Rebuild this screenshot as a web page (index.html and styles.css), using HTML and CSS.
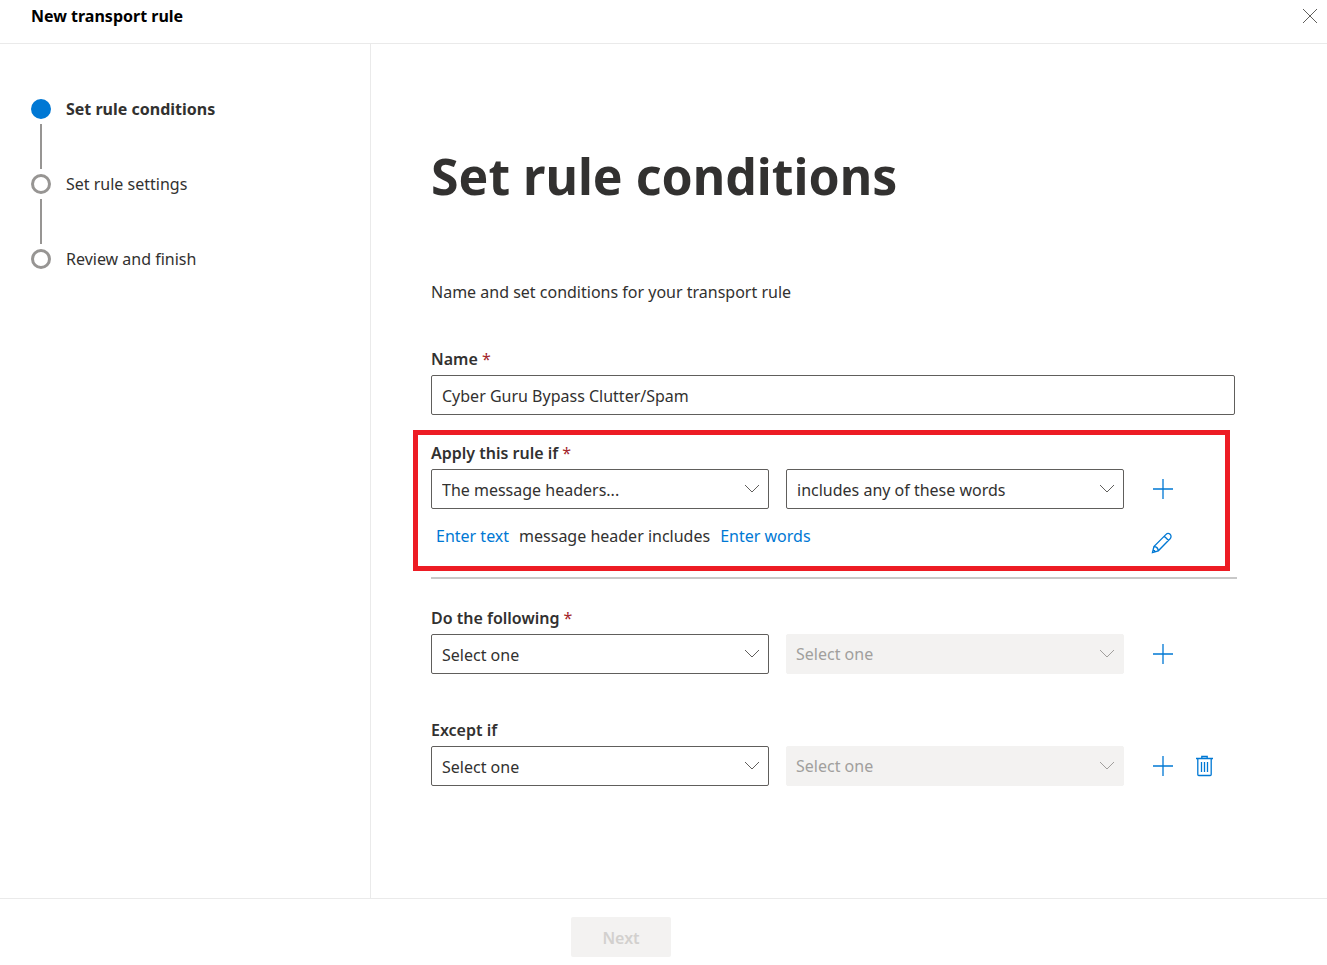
FILE: index.html
```html
<!DOCTYPE html>
<html lang="en">
<head>
    <meta charset="UTF-8">
    <meta name="viewport" content="width=device-width, initial-scale=1.0">
    <title>New transport rule</title>
    <link rel="stylesheet" href="styles.css">
</head>
<body>

    <header class="panel-header">
        <h2>New transport rule</h2>
        <button type="button" class="close-btn" aria-label="Close">
            <svg width="16" height="16" viewBox="0 0 16 16"><path d="M1 1l14 14M15 1L1 15"/></svg>
        </button>
    </header>

    <div class="panel-body">
        <nav class="steps">
            <ol>
                <li class="step active"><span class="dot"></span>Set rule conditions</li>
                <li class="step"><span class="dot"></span>Set rule settings</li>
                <li class="step"><span class="dot"></span>Review and finish</li>
            </ol>
        </nav>

        <main>
            <form id="ruleForm">
                <h1>Set rule conditions</h1>
                <p class="intro">Name and set conditions for your transport rule</p>

                <div class="group">
                    <label for="ruleName">Name <span class="required">*</span></label>
                    <input type="text" id="ruleName" value="Cyber Guru Bypass Clutter/Spam" required>
                </div>

                <div class="group highlighted">
                    <label for="applyIf">Apply this rule if <span class="required">*</span></label>
                    <div class="row">
                        <div class="select-box">
                            <select id="applyIf"><option>The message headers...</option></select>
                            <svg class="chevron" width="16" height="10" viewBox="0 0 16 10"><path d="M1 1l7 7 7-7"/></svg>
                        </div>
                        <div class="select-box">
                            <select aria-label="Header condition"><option>includes any of these words</option></select>
                            <svg class="chevron" width="16" height="10" viewBox="0 0 16 10"><path d="M1 1l7 7 7-7"/></svg>
                        </div>
                        <div class="actions">
                            <button type="button" class="icon-btn" aria-label="Add condition">
                                <svg width="22" height="22" viewBox="0 0 22 22"><path d="M12 1v20M2 11h20"/></svg>
                            </button>
                        </div>
                    </div>
                    <div class="row summary">
                        <p><a href="#">Enter text</a> <span>message header includes</span> <a href="#">Enter words</a></p>
                        <div class="actions">
                            <button type="button" class="icon-btn" aria-label="Edit condition">
                                <svg width="22" height="22" viewBox="0 0 22 22"><path d="M1.5 20.5l1.4-6L14.8 2.6c1.3-1.3 3-1.5 4.300-.3s1.200 3.100 0 4.400L7.300 18.800zM13.300 4.200l4.300 4.300M2.900 14.500c2.300.1 4.100 1.900 4.400 4.300M2.200 17.800c1 .2 1.700.9 1.900 2"/></svg>
                            </button>
                        </div>
                    </div>
                </div>
                <hr>

                <div class="group">
                    <label for="doFollowing">Do the following <span class="required">*</span></label>
                    <div class="row">
                        <div class="select-box">
                            <select id="doFollowing"><option>Select one</option></select>
                            <svg class="chevron" width="16" height="10" viewBox="0 0 16 10"><path d="M1 1l7 7 7-7"/></svg>
                        </div>
                        <div class="select-box">
                            <select aria-label="Action detail" disabled><option>Select one</option></select>
                            <svg class="chevron" width="16" height="10" viewBox="0 0 16 10"><path d="M1 1l7 7 7-7"/></svg>
                        </div>
                        <div class="actions">
                            <button type="button" class="icon-btn" aria-label="Add action">
                                <svg width="22" height="22" viewBox="0 0 22 22"><path d="M12 1v20M2 11h20"/></svg>
                            </button>
                        </div>
                    </div>
                </div>

                <div class="group except">
                    <label for="exceptIf">Except if</label>
                    <div class="row">
                        <div class="select-box">
                            <select id="exceptIf"><option>Select one</option></select>
                            <svg class="chevron" width="16" height="10" viewBox="0 0 16 10"><path d="M1 1l7 7 7-7"/></svg>
                        </div>
                        <div class="select-box">
                            <select aria-label="Exception detail" disabled><option>Select one</option></select>
                            <svg class="chevron" width="16" height="10" viewBox="0 0 16 10"><path d="M1 1l7 7 7-7"/></svg>
                        </div>
                        <div class="actions">
                            <button type="button" class="icon-btn" aria-label="Add exception">
                                <svg width="22" height="22" viewBox="0 0 22 22"><path d="M12 1v20M2 11h20"/></svg>
                            </button>
                            <button type="button" class="icon-btn" aria-label="Delete exception">
                                <svg width="22" height="22" viewBox="0 0 22 22"><path d="M3 3.500h17M4.800 3.500v16q0 1 1 1h11.400q1 0 1-1v-16M8.800 3.500V1.500h5.400v2M8.500 7v10M11.500 7v10M14.500 7v10"/></svg>
                            </button>
                        </div>
                    </div>
                </div>
            </form>
        </main>
    </div>

    <footer class="panel-footer">
        <button type="submit" form="ruleForm" class="next-btn" disabled>Next</button>
    </footer>

</body>
</html>
```
FILE: styles.css
```css
* {
    box-sizing: border-box;
}
body {
    font-family: "Segoe UI", "Noto Sans", sans-serif;
    font-size: 16px;
    line-height: 24px;
    color: #323130;
    background-color: white;
    margin: 0;
    min-height: 100vh;
    display: flex;
    flex-direction: column;
}
h1, h2, p, ol {
    margin: 0;
    padding: 0;
}
svg {
    display: block;
    fill: none;
    stroke: currentColor;
}
button {
    font: inherit;
    border: none;
    padding: 0;
    background: none;
    cursor: pointer;
}
a {
    color: #0078d4;
    text-decoration: none;
}
a:hover {
    text-decoration: underline;
}

/* header */
.panel-header {
    display: flex;
    justify-content: space-between;
    align-items: center;
    height: 44px;
    padding: 0 9px 11px 31px;
    border-bottom: 1px solid #eaeaea;
}
.panel-header h2 {
    font-size: 16px;
    font-weight: 700;
    color: black;
}
.close-btn {
    color: #605e5c;
}

/* body */
.panel-body {
    flex: 1;
    display: flex;
}
.steps {
    width: 371px;
    flex-shrink: 0;
    padding: 53px 31px;
    border-right: 1px solid #eaeaea;
}
.steps ol {
    list-style: none;
}
.step {
    position: relative;
    display: flex;
    align-items: center;
    gap: 15px;
    margin-bottom: 51px;
}
.dot {
    width: 20px;
    height: 20px;
    border: 3px solid #979593;
    border-radius: 50%;
}
.step:not(:last-child)::after {
    content: "";
    position: absolute;
    left: 9px;
    top: 27px;
    width: 2px;
    height: 45px;
    background-color: #979593;
}
.active {
    font-weight: 700;
}
.active .dot {
    border-color: #0078d4;
    background-color: #0078d4;
}
main {
    flex: 1;
    padding: 96px 92px 40px 60px;
}
h1 {
    font-size: 50px;
    line-height: 72px;
    font-weight: 700;
    margin-bottom: 68px;
}
.intro {
    margin-bottom: 43px;
}

/* form */
.group {
    position: relative;
    margin-bottom: 26px;
}
.group label {
    display: block;
    font-weight: 600;
    margin-bottom: 4px;
}
.required {
    font-weight: 400;
    color: #a4262c;
}
input, select {
    appearance: none;
    display: block;
    width: 100%;
    height: 40px;
    padding: 2px 10px 0;
    font: inherit;
    color: #323130;
    background-color: white;
    border: 1px solid #605e5c;
    border-radius: 2px;
}
.row {
    display: grid;
    grid-template-columns: 1fr 1fr 94px;
    gap: 17px;
    align-items: center;
}
.select-box {
    position: relative;
}
.chevron {
    position: absolute;
    right: 9px;
    top: 15px;
    color: #605e5c;
    pointer-events: none;
}
select:disabled {
    padding: 0 9px;
    color: #a19f9d;
    background-color: #f3f2f1;
    border-color: #f3f2f1;
    opacity: 1;
}
select:disabled + .chevron {
    color: #a19f9d;
}
.actions {
    display: flex;
    gap: 20px;
    padding-left: 10px;
}
.icon-btn {
    color: #0078d4;
}
.icon-btn svg {
    stroke-width: 1.3;
}
.summary {
    height: 68px;
}
.summary p {
    grid-column: 1 / 3;
    display: flex;
    gap: 10px;
    padding: 0 5px 14px;
}
.highlighted {
    margin-bottom: 0;
}
.highlighted::after {
    content: "";
    position: absolute;
    top: -11px;
    right: 5px;
    bottom: 6px;
    left: -18px;
    border: 5px solid #ed1c24;
    pointer-events: none;
}
/* the first action buttons sit under the highlight frame */
hr {
    height: 2px;
    margin: 0 -2px 27px 0;
    border: none;
    background-color: #c8c8c8;
}
.except {
    margin-top: 44px;
}

/* footer */
.panel-footer {
    display: flex;
    justify-content: center;
    height: 67px;
    padding: 18px 85px 8px 0;
    border-top: 1px solid #eaeaea;
}
.next-btn {
    width: 100px;
    height: 40px;
    padding-top: 2px;
    font-weight: 600;
    border-radius: 2px;
}
.next-btn:disabled {
    color: #d2d0ce;
    background-color: #f3f2f1;
    cursor: default;
}
```
